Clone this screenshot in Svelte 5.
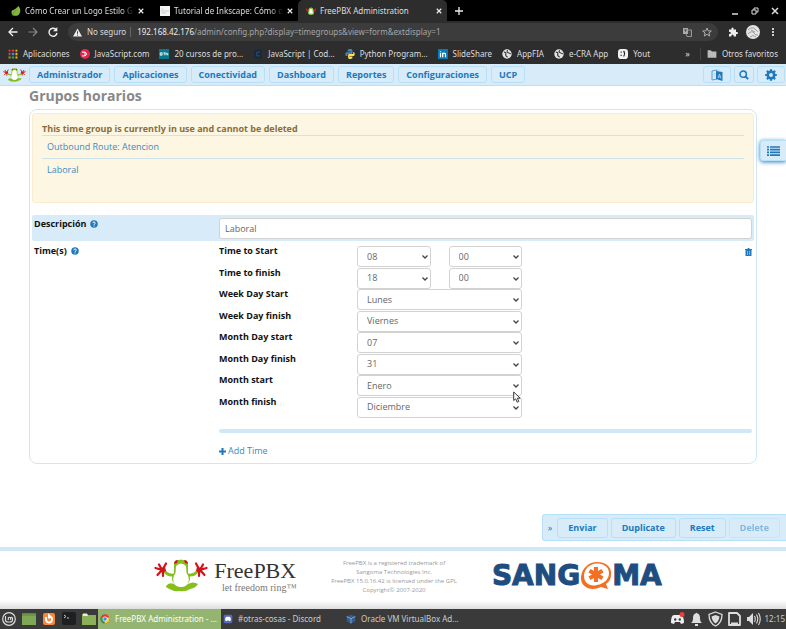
<script>
  const tabs = [
    { title: 'Cómo Crear un Logo Estilo Ge', icon: 'leaf' },
    { title: 'Tutorial de Inkscape: Cómo di', icon: 'page' },
    { title: 'FreePBX Administration', icon: 'frog', active: true }
  ];
  const bookmarks = [
    { label: 'Aplicaciones', icon: 'apps' },
    { label: 'JavaScript.com', icon: 'js' },
    { label: '20 cursos de pro...', icon: 'btn' },
    { label: 'JavaScript | Cod...', icon: 'code' },
    { label: 'Python Program...', icon: 'python' },
    { label: 'SlideShare', icon: 'linkedin' },
    { label: 'AppFIA', icon: 'globe' },
    { label: 'e-CRA App', icon: 'globe' },
    { label: 'Yout', icon: 'yout' }
  ];
  const menu = ['Administrador', 'Aplicaciones', 'Conectividad', 'Dashboard', 'Reportes', 'Configuraciones', 'UCP'];
  const usages = ['Outbound Route: Atencion', 'Laboral'];
  const fields = [
    { id: 'time-start', label: 'Time to Start', values: ['08', '00'] },
    { id: 'time-finish', label: 'Time to finish', values: ['18', '00'] },
    { id: 'wday-start', label: 'Week Day Start', values: ['Lunes'] },
    { id: 'wday-finish', label: 'Week Day finish', values: ['Viernes'] },
    { id: 'mday-start', label: 'Month Day start', values: ['07'] },
    { id: 'mday-finish', label: 'Month Day finish', values: ['31'] },
    { id: 'month-start', label: 'Month start', values: ['Enero'] },
    { id: 'month-finish', label: 'Month finish', values: ['Diciembre'] }
  ];
  let description = $state('Laboral');
</script>

{#snippet frog()}
  <svg class="frog" viewBox="0 0 54 33" aria-hidden="true">
    <path d="M10 11 Q13 17 20 16 M44 11 Q41 17 34 16" fill="none" stroke="#86bf1c" stroke-width="2.8" />
    <path d="M12 27 Q15 23 20 25 Q27 29 34 25 Q39 22 44 25 Q42 29 36 30 Q32 33 25 32 Q19 33 12 28Z" fill="#86bf1c" />
    <path d="M20 6 C20 -1 34 -1 34 6 L34 14 C38 19 36 27 27 27 C18 27 16 19 20 14Z" fill="#86bf1c" />
    <path d="M22 7 Q27 2 32 7 L32.500 14 C37 20 35 28 27 28 C19 28 17 20 21.500 14Z" fill="#fff" />
    <path d="M20 5 Q20 1 24 1 L23 4Z M34 5 Q34 1 30 1 L31 4Z" fill="#c8161d" />
    <path d="M1.500 9 L8 11 L5 5.500 M9 10 L12 4.500 M8 11 L3.500 16 M9 11 L9 17 M52.500 9 L46 11 L49 5.500 M45 10 L42 4.500 M46 11 L50.500 16 M45 11 L45 17" fill="none" stroke="#d3121a" stroke-width="2.2" stroke-linecap="round" />
    <path d="M6 9L11 8L12 12L8 14Z M48 9L43 8L42 12L46 14Z" fill="#d3121a" />
  </svg>
{/snippet}

{#snippet icon(name)}
  <svg class="icon" viewBox="0 0 16 16" aria-hidden="true">
    {#if name === 'leaf'}
      <path d="M12 0 C16 5 16 12 11 15 C6 17 1 15 1 11 C0 5 4 9 12 0Z" fill="#82b541" /><path d="M2 15 Q5 8 9 6" stroke="#5f8f2c" stroke-width="1.3" fill="none" />
    {:else if name === 'page'}
      <path d="M0 0H16V16H0Z" fill="#f4f4f4" /><path d="M1 8H15M2 11H10M2 5H6" stroke="#b9b9b9" />
    {:else if name === 'frog'}
      <path d="M4 6 C5 1 11 1 12 6 L13 12 Q8 17 3 12Z" fill="#8cc63e" /><path d="M6 5H10L11 12H5Z" fill="#fff" /><path d="M0 4L3 8M16 4L13 8M1 8H3M15 8H13" stroke="#e21b1b" stroke-width="2" />
    {:else if name === 'apps'}
      <path d="M1 1h3v3H1z M1 6h3v4H1z" fill="#ea4335" /><path d="M6 1h4v3H6z M1 12h3v3H1z" fill="#ea4335" /><path d="M12 1h3v3h-3z M12 6h3v4h-3z M12 12h3v3h-3z" fill="#fbbc05" /><path d="M6 6h4v4H6z" fill="#4285f4" /><path d="M6 12h4v3H6z M1 12h3v3H1z" fill="#34a853" />
    {:else if name === 'js'}
      <circle cx="8" cy="8" r="8" fill="#e8254f" /><path d="M3 5H8V11H3M8 5Q13 8 8 11" stroke="#fff" stroke-width="1.6" fill="none" />
    {:else if name === 'btn'}
      <path d="M0 0H16V16H0Z" fill="#08788c" /><path d="M2 6H5V10H2ZM2 8H5M7 6H10M8.500 6V10M11 10V6L14 10V6" stroke="#fff" stroke-width="1.2" fill="none" />
    {:else if name === 'code'}
      <path d="M2 1H14V15H2Z" fill="#172a3b" /><path d="M6 5H11M6 5V11H11" stroke="#285475" stroke-width="1.5" fill="none" />
    {:else if name === 'python'}
      <path d="M8 0C4 0 4 2 4 4H9V5H2C0 5 0 11 2 11H4V8H10C12 8 12 6 12 3C12 1 11 0 8 0Z" fill="#4584b6" /><path d="M8 16C12 16 12 14 12 12H7V11H14C16 11 16 5 14 5H13V8H6C5 9 5 9 5 13C5 15 6 16 8 16Z" fill="#ffde57" />
    {:else if name === 'linkedin'}
      <path d="M0 0H16V16H0Z" fill="#0a78b5" /><path d="M4 6V13M7.500 6V13M7.500 9C8 6 12 6 12 9V13M4 3V4.500" stroke="#fff" stroke-width="2" fill="none" />
    {:else if name === 'globe'}
      <circle cx="8" cy="8" r="7.500" fill="#e4e4e4" /><path d="M3 5Q7 5 6 8T9 13M9 2Q7 5 10 6T14 8" stroke="#3a3a3a" stroke-width="1.900" fill="none" />
    {:else if name === 'yout'}
      <rect width="16" height="16" rx="5" fill="#f1f1f1" /><path d="M5 4V6M5 9V11M9 3Q12 7 9 12" stroke="#222" stroke-width="1.800" fill="none" />
    {:else if name === 'help'}
      <circle cx="8" cy="8" r="7.500" fill="#2079bd" /><path d="M5.500 6.200C5.500 3.200 10.700 3.200 10.500 6.200C10.400 8 8 7.700 8 9.800M8 11V13" stroke="#fff" stroke-width="2" fill="none" />
    {/if}
  </svg>
{/snippet}

<div class="screen">
  <header class="browser">
    <div class="tabs">
      {#each tabs as tab}
        <div class="tab" class:active={tab.active}>
          {@render icon(tab.icon)}
          <span class="tab-title">{tab.title}</span>
          <button class="bare" aria-label="Cerrar pestaña"><svg class="x" viewBox="0 0 8 8"><path d="M1 1L7 7M7 1L1 7" stroke="#eee" stroke-width="1.500" /></svg></button>
        </div>
      {/each}
      <button class="bare plus" aria-label="Nueva pestaña"><svg class="x" viewBox="0 0 8 8"><path d="M4 0V8M0 4H8" stroke="#eee" stroke-width="1.300" /></svg></button>
      <div class="window-buttons">
        <button class="bare" aria-label="Minimizar"><svg class="x" viewBox="0 0 8 8"><path d="M1 7H7" stroke="#ddd" stroke-width="1.500" /></svg></button>
        <button class="bare" aria-label="Restaurar"><svg class="x" viewBox="0 0 8 8"><path d="M1 3H5V7H1ZM3 3V1H7V5H5" stroke="#ddd" fill="none" /></svg></button>
        <button class="bare" aria-label="Cerrar"><svg class="x" viewBox="0 0 8 8"><path d="M1 1L7 7M7 1L1 7" stroke="#ddd" stroke-width="1.500" /></svg></button>
      </div>
    </div>

    <div class="toolbar">
      <button class="bare" aria-label="Atrás"><svg class="glyph" viewBox="0 0 10 10"><path d="M9.500 5H1M5 1L1 5L5 9" stroke="#eee" stroke-width="1.300" fill="none" /></svg></button>
      <button class="bare" aria-label="Adelante"><svg class="glyph" viewBox="0 0 10 10"><path d="M.5 5H9M5 1L9 5L5 9" stroke="#888" stroke-width="1.200" fill="none" /></svg></button>
      <button class="bare" aria-label="Recargar"><svg class="glyph" viewBox="0 0 10 10"><path d="M8 2.500A4 4 0 1 0 9 6" stroke="#eee" stroke-width="1.400" fill="none" /><path d="M9.300 0V4.300H5Z" fill="#eee" /></svg></button>
      <div class="omnibox">
        <svg class="warn" viewBox="0 0 10 10" aria-hidden="true"><path d="M5 .5L10 9.500H0Z" fill="#eee" /><path d="M5 3.500V6.500M5 7.300V8.500" stroke="#3c3c3c" /></svg>
        <span class="insecure">No seguro</span>
        <span class="url"><b>192.168.42.176</b>/admin/config.php?display=timegroups&amp;view=form&amp;extdisplay=1</span>
        <svg class="glyph" viewBox="0 0 10 10" aria-hidden="true"><path d="M1 1H6V7H1Z" fill="#aaa" /><path d="M5 3H9.500V9.500H5L4 7" stroke="#999" fill="none" /><path d="M2 3H5M3.500 2V5M6 5H9M7 5L8.500 8" stroke="#555" stroke-width=".8" /></svg>
        <svg class="glyph" viewBox="0 0 10 10" aria-hidden="true"><path d="M5 1L6.200 3.900L9.300 4L6.900 6L7.700 9L5 7.300L2.300 9L3.100 6L.7 4L3.800 3.900Z" stroke="#bbb" fill="none" stroke-width=".9" /></svg>
      </div>
      <svg class="glyph" viewBox="0 0 10 10" aria-hidden="true"><path d="M1 2.500H3.500Q3 .5 4.500 .5T5.500 2.500H8V5Q10 4.500 10 6T8 7V9.500H5.800Q5.500 7.500 4.500 7.500T3.200 9.500H1V7Q3 7 3 6T1 4.800Z" fill="#eee" /></svg>
      <svg class="avatar" viewBox="0 0 14 14" aria-hidden="true"><circle cx="7" cy="7" r="7" fill="#e4e4e4" /><path d="M2 5Q6 1 9 4T12 7M2 9Q6 5 8 8T12 10M4 12Q7 9 10 12M5 5L9 7" stroke="#888" stroke-width=".8" fill="none" /></svg>
      <svg class="glyph" viewBox="0 0 10 10" aria-hidden="true"><path d="M4 1h2v2H4zM4 4h2v2H4zM4 7h2v2H4z" fill="#ccc" /></svg>
    </div>

    <div class="bookmarks">
      {#each bookmarks as mark}
        <a href="#bookmark">{@render icon(mark.icon)}{mark.label}</a>
      {/each}
      <span class="more">»</span>
      <a class="others" href="#bookmark">
        <svg class="icon" viewBox="0 0 16 16" aria-hidden="true"><path d="M1 2H6L8 4H15V14H1Z" fill="#bbb" /></svg>Otros favoritos
      </a>
    </div>
  </header>

  <nav class="menubar">
    <a class="home" href="#home" aria-label="FreePBX">{@render frog()}</a>
    <div class="menu">
      {#each menu as item}
        <button class="btn">{item}</button>
      {/each}
    </div>
    <button class="btn wide" aria-label="Idioma"><svg class="tool" viewBox="0 0 12 12"><path d="M1 2L6 1V10L1 11Z" fill="none" stroke="#5c9fd0" /><path d="M5 2L11.500 3V12L5 10Z" fill="#2079bd" /><path d="M7 9L8.500 5L10 9.500M7.500 8H9.500M2 5H5M3.500 4L3 8M3 1Q6 -1 9 1" stroke="#b9d9ef" fill="none" stroke-width=".8" /></svg></button>
    <button class="btn" aria-label="Buscar"><svg class="tool search" viewBox="0 0 12 12"><circle cx="5" cy="5" r="3.800" stroke="#2079bd" stroke-width="1.800" fill="none" /><path d="M7.800 7.800L11 11" stroke="#2079bd" stroke-width="2.200" /></svg></button>
    <button class="btn wide" aria-label="Ajustes"><svg class="tool" viewBox="0 0 12 12"><circle cx="6" cy="6" r="3.200" stroke="#2079bd" stroke-width="2.600" fill="none" /><path d="M6 .2V2.500M6 9.500V11.800M.2 6H2.500M9.500 6H11.800M1.900 1.900L3.500 3.500M8.500 8.500L10.100 10.100M10.100 1.900L8.500 3.500M3.500 8.500L1.900 10.100" stroke="#2079bd" stroke-width="2.200" /></svg></button>
  </nav>

  <main>
    <h1>Grupos horarios</h1>
    <section class="card">
      <div class="notice">
        <strong>This time group is currently in use and cannot be deleted</strong>
        {#each usages as usage}
          <a href="#usage">{usage}</a>
        {/each}
      </div>

      <form>
        <div class="row shaded">
          <label for="description">Descripción {@render icon('help')}</label>
          <input id="description" bind:value={description} />
        </div>
        <div class="row times">
          <span class="label">Time(s) {@render icon('help')}</span>
          <div class="time-panel">
            <div class="time-set">
              <div class="fields">
                {#each fields as field}
                  <div class="field">
                    <label for={field.id}>{field.label}</label>
                    <div class="selects">
                      {#each field.values as value, i}
                        <div class="select">
                          <select id={i ? field.id + '-minute' : field.id} aria-label={i ? field.label + ' (min)' : undefined}>
                            <option>{value}</option>
                          </select>
                          <svg viewBox="0 0 6 4" aria-hidden="true"><path d="M.5 .5L3 3L5.500 .5" stroke="#444" stroke-width="1.300" fill="none" /></svg>
                        </div>
                      {/each}
                    </div>
                  </div>
                {/each}
              </div>
              <button class="bare trash" type="button" aria-label="Borrar"><svg viewBox="0 0 7 8"><path d="M0 1H2.200L3 0H4L4.800 1H7V2H0Z" fill="#2079bd" /><path d="M.5 2H6.500V8H.5Z" fill="#2079bd" /><path d="M2.500 3V7M4.500 3V7" stroke="#8fbbdd" stroke-width=".8" /></svg></button>
            </div>
            <hr />
            <a class="add" href="#add"><svg viewBox="0 0 8 8" aria-hidden="true"><path d="M4 0V8M0 4H8" stroke="#2079bd" stroke-width="2.400" /></svg>Add Time</a>
          </div>
        </div>
      </form>
    </section>
    <button class="side-toggle" aria-label="Lista"><svg viewBox="0 0 13 10"><path d="M0 1H2M3 1H13M0 3.700H2M3 3.700H13M0 6.400H2M3 6.400H13M0 9.100H2M3 9.100H13" stroke="#2079bd" stroke-width="1.700" /></svg></button>
  </main>

  <div class="actions">
    <span class="collapse">»</span>
    <button class="btn">Enviar</button>
    <button class="btn">Duplicate</button>
    <button class="btn">Reset</button>
    <button class="btn" disabled>Delete</button>
  </div>

  <footer>
    <div class="brand">
      {@render frog()}
      <div class="brand-text"><span class="brand-name">FreePBX</span><span class="brand-tag">let freedom ring™</span></div>
    </div>
    <p>FreePBX is a registered trademark of<br />Sangoma Technologies Inc.<br />FreePBX 15.0.16.42 is licensed under the GPL<br />Copyright© 2007-2020</p>
    <div class="sangoma">
      <span>SANG</span>
      <svg viewBox="0 0 32 28" aria-hidden="true">
        <path fill-rule="evenodd" d="M17 0C26 0 32 5 31 13C31 17 29 20 26 22L28 27L21 25C11 30 0 25 1 15C2 6 9 0 17 0ZM18 1.500C9 1 4 8 4 14C4 21 10 25 17 23C24 22 29 17 29 11C29 5 24 2 18 1.500Z" fill="#f36f21" />
        <path d="M16 5V20M9.500 8.700L22.500 16.300M22.500 8.700L9.500 16.300" stroke="#f36f21" stroke-width="4" />
      </svg>
      <span>MA</span>
    </div>
  </footer>

  <div class="taskbar">
    <button class="bare" aria-label="Menú"><svg viewBox="0 0 14 14"><circle cx="7" cy="7" r="6.300" stroke="#ddd" stroke-width="1.200" fill="none" /><path d="M3.500 4V8Q3.500 10 6 10H8Q10.500 10 10.500 8V6Q9.500 4.500 8.700 6V8M8.700 6Q7 4.500 6.300 6V8" stroke="#ddd" stroke-width="1.100" fill="none" /></svg></button>
    <button class="bare" aria-label="Escritorio"><svg viewBox="0 0 14 14"><path d="M0 1.500H14V13H0Z" fill="#7ea853" /><path d="M0 1.500H14V4H0Z" fill="#6b9742" /></svg></button>
    <button class="bare" aria-label="Editor"><svg viewBox="0 0 14 14"><rect x="1" y="1" width="12" height="12" rx="2" fill="#f5863a" /><path d="M4 5Q3.500 10.500 7 10.500T10 6L7 3.500V6.500" stroke="#fff" stroke-width="2" fill="none" /></svg></button>
    <button class="bare" aria-label="Terminal"><svg viewBox="0 0 14 14"><rect width="14" height="13" rx="2" fill="#1d1f20" /><path d="M2 3L4 4.500L2 6M5 6H7" stroke="#ccc" fill="none" /></svg></button>
    <button class="bare" aria-label="Archivos"><svg viewBox="0 0 14 14"><path d="M0 2H5L6 3H14V13H0Z" fill="#8ab158" /><path d="M1 1.500H5L6 4H1Z" fill="#e8eddf" /></svg></button>
    <button class="task current"><svg viewBox="0 0 14 14"><circle cx="7" cy="7" r="6.500" fill="#e33b2e" /><path d="M7 7L1.400 4A6.500 6.500 0 0 0 6.500 13.500Z" fill="#22a354" /><path d="M7 7L6.500 13.500A6.500 6.500 0 0 0 13 5H8Z" fill="#fcc934" /><circle cx="7" cy="7" r="3" fill="#4285f4" stroke="#fff" /></svg>FreePBX Administration - ...</button>
    <button class="task"><svg viewBox="0 0 14 14"><rect x="1" y="1" width="12" height="12" rx="2" fill="#5769b8" /><path d="M3 9Q3 4 5 4H9Q11 4 11 9L9 10L8 9H6L5 10Z" fill="#fff" /></svg>#otras-cosas - Discord</button>
    <button class="task"><svg viewBox="0 0 14 14"><path d="M7 1L13 3.500V10L7 13.500L1 10V3.500Z" fill="#345c8f" /><path d="M1 3.500L7 6.500L13 3.500M7 6.500V13" stroke="#a8c0dc" fill="none" /></svg>Oracle VM VirtualBox Ad...</button>
    <div class="tray">
      <svg viewBox="0 0 15 16" aria-hidden="true"><path d="M1 12Q1 4 4 4L6 4H9L11 4Q14 5 14 12L11 13L10 11H5L4 13Z" fill="#eee" /><circle cx="5.200" cy="8.500" r="1.200" fill="#3a3a3a" /><circle cx="9.800" cy="8.500" r="1.200" fill="#3a3a3a" /><circle cx="12" cy="3.500" r="2.500" fill="#ee3d3d" /></svg>
      <svg viewBox="0 0 15 16" aria-hidden="true"><path d="M2 12Q4 11 4 7Q4 3 6.500 2.500Q7.500 1 8.500 2.500Q11 3 11 7Q11 11 13 12ZM6 13H9V15H6Z" fill="#ddd" /></svg>
      <svg viewBox="0 0 15 16" aria-hidden="true"><path d="M7.500 1L14 3.500Q14 12 7.500 15Q1 12 1 3.500Z" fill="none" stroke="#ddd" stroke-width="1.300" /><path d="M7.500 4L11.500 5.500Q11 10 7.500 12.500Q4 10 3.500 5.500Z" fill="#ddd" /></svg>
      <svg viewBox="0 0 15 16" aria-hidden="true"><path d="M2 2H10L13 5V14H2Z" fill="none" stroke="#ddd" stroke-width="1.800" stroke-linejoin="round" /><path d="M4 11.500H11V13H4Z" fill="#ddd" /></svg>
      <svg viewBox="0 0 15 16" aria-hidden="true"><path d="M1 6H3L7 2V14L3 10H1Z" fill="#ddd" /><path d="M8.500 5Q10 8 8.500 11M10.500 3.500Q13 8 10.500 12.500M12.500 2Q16 8 12.500 14" stroke="#ddd" stroke-width="1.100" fill="none" /></svg>
      <time>12:15</time>
    </div>
  </div>

  <svg class="pointer" viewBox="0 0 8 12" aria-hidden="true"><path d="M.7 1V9.500L2.700 7.800L4.200 11.200L5.800 10.500L4.400 7.200H7.200Z" fill="#fff" stroke="#222" stroke-width=".9" /></svg>
</div>

<style>
  :global(body) { background: #fff; }
  .screen, .screen * { box-sizing: border-box; }
  .screen {
    position: relative;
    display: flex;
    flex-direction: column;
    min-height: 100vh;
    overflow: hidden;
    font: 9px/12px "Open Sans", "Noto Sans", sans-serif;
    color: #111;
  }
  a { color: #3a8ac4; text-decoration: none; }
  button, input, select { font: inherit; }
  svg { display: block; flex: none; }
  .bare { display: flex; padding: 0; border: 0; background: none; }
  .icon { width: 10px; height: 10px; }

  .browser { background: #2d2d2d; color: #ddd; font-family: "Noto Sans", sans-serif; font-size: 8px; }
  .tabs { display: flex; align-items: center; height: 21px; background: #000; }
  .tab { display: flex; align-items: center; gap: 4px; flex: 0 1 149px; min-width: 0; height: 21px; padding: 0 5px 0 11px; white-space: nowrap; }
  .tab.active { background: #2d2d2d; border-radius: 5px 5px 0 0; padding-left: 8px; }
  .tab-title { flex: 1; overflow: hidden; mask-image: linear-gradient(90deg, #000 88%, transparent); }
  .active .tab-title { mask-image: none; }
  .x { width: 8px; height: 8px; }
  .tab .x { width: 6px; height: 6px; }
  .plus { margin-left: 8px; }
  .window-buttons { display: flex; gap: 12px; margin-left: auto; padding-right: 7px; }
  .toolbar { display: flex; align-items: center; gap: 10px; height: 22px; padding: 0 8px; }
  .glyph { width: 10px; height: 10px; }
  .avatar { width: 14px; height: 14px; margin: 0 -2px; }
  .omnibox { display: flex; align-items: center; gap: 10px; flex: 1; height: 18px; padding: 0 6px 0 5px; border-radius: 9px; background: #3c3c3c; }
  .warn { width: 9px; height: 9px; margin-right: -5px; }
  .insecure { padding-right: 4px; border-right: 1px solid #666; line-height: 10px; margin-right: -4px; }
  .url { flex: 1; color: #a5a5a5; }
  .url b { color: #eee; font-weight: 400; }
  .bookmarks { display: flex; align-items: center; gap: 10px; height: 21px; padding: 0 8px; white-space: nowrap; }
  .bookmarks a { display: flex; align-items: center; gap: 5px; color: #ddd; }
  .more { margin-left: auto; font-size: 9px; }
  .bookmarks .others { padding-left: 6px; border-left: 1px solid #444; }

  .btn {
    display: flex;
    align-items: center;
    justify-content: center;
    padding: 0 7px;
    border: 1px solid #b8dff8;
    border-radius: 3px;
    background: #d7ebf9;
    color: #2079bd;
    font-weight: 700;
  }
  .menubar { display: flex; align-items: center; gap: 3px; height: 22px; padding: 0 1px 0 3px; background: #d7ebf9; border-bottom: 1px solid #b8dff8; }
  .menu { display: flex; flex: 1; gap: 4px; }
  .menubar .btn { height: 17px; }
  .home { width: 23px; }
  .home .frog { width: 23px; height: 14px; }
  .tool { width: 12px; height: 12px; }
  .search { width: 10px; height: 10px; }
  .menubar .btn:has(.search) { padding: 0 4px; }

  main { position: relative; padding: 0 29px; }
  h1 { margin: 0; font-size: 14px; line-height: 19px; color: #888; }
  .card { margin-top: 4px; padding: 3px 2px 4px; border: 1px solid #cfe6f5; border-radius: 8px; }
  .notice { display: flex; flex-direction: column; min-height: 90px; padding: 8px 9px; border: 1px solid #faecd0; border-radius: 3px; background: #fdf6e2; color: #8a6d3b; }
  .notice strong { line-height: 13px; }
  .notice a { height: 23px; padding: 0 5px; border-top: 1px solid #cfe4ea; line-height: 22px; }
  form { margin-top: 12px; }
  .row { display: grid; grid-template-columns: 185px 1fr; padding: 3px 2px 2px; }
  .shaded { background: #d7ebf9; border-radius: 2px; }
  .row label, .label { display: flex; gap: 4px; font-weight: 700; line-height: 12px; }
  .row .icon { width: 8px; height: 8px; margin-top: 2px; }
  input, select { width: 100%; height: 21px; border: 1px solid #d2d2d2; border-radius: 3px; background: #fff; color: #666; }
  input { padding: 0 5px; }
  .times { padding-top: 4px; }
  .time-set { display: flex; justify-content: space-between; }
  .fields { display: grid; grid-template-rows: repeat(8, minmax(0, 1fr)); height: 172px; }
  .field { display: grid; grid-template-columns: 138px 165px; }
  .selects { display: flex; gap: 18px; padding-top: 1px; }
  .select { position: relative; flex: 1; }
  select { display: block; appearance: none; padding: 0 9px; }
  .select svg { position: absolute; right: 3px; top: 9px; width: 6px; height: 4px; pointer-events: none; }
  .trash svg { width: 7px; height: 8px; margin-top: 3px; }
  .trash { align-self: flex-start; }
  hr { height: 4px; margin: 12px 0; border: 0; border-radius: 2px; background: #d0e8f6; }
  .add { display: flex; align-items: center; gap: 2px; }
  .add svg { width: 7px; height: 7px; }
  .side-toggle { position: absolute; right: 0; top: 54px; display: flex; align-items: center; width: 26px; height: 21px; padding: 0 0 0 6px; border: 1px solid #b8dff8; border-right: 0; border-radius: 3px 0 0 3px; background: #d7ebf9; box-shadow: 0 1px 4px #2079bd; }
  .side-toggle svg { width: 13px; height: 10px; }

  .actions { display: flex; align-items: center; align-self: flex-end; gap: 3px; height: 27px; margin-top: auto; padding: 0 6px 0 5px; border: 1px solid #b8dff8; border-right: 0; border-radius: 3px 0 0 3px; background: #d7ebf9; }
  .actions .btn { height: 20px; padding: 0 10px; }
  .actions .btn:disabled { opacity: 0.45; }
  .collapse { margin-right: 2px; color: #2079bd; }

  footer { display: flex; justify-content: center; gap: 35px; height: 62px; margin-top: 6px; padding: 8px 0 0 30px; border-top: 4px solid #d0e8f6; background: linear-gradient(#fff 85%, #ddd); }
  .brand { display: flex; gap: 6px; }
  .brand .frog { width: 54px; height: 33px; }
  .brand-text { display: flex; flex-direction: column; align-items: flex-end; font-family: "Liberation Serif", serif; color: #333; }
  .brand-name { font-size: 22px; line-height: 23px; }
  .brand-tag { font-size: 10px; line-height: 12px; color: #777; }
  footer p { margin: 0; font-size: 6px; line-height: 9px; text-align: center; color: #999; }
  .sangoma { display: flex; align-items: center; height: 34px; color: #204d80; font: 700 28px/28px "DejaVu Sans", sans-serif; -webkit-text-stroke: 1px #204d80; }
  .sangoma svg { width: 32px; height: 28px; }

  .taskbar { display: flex; align-items: center; gap: 6px; height: 20px; padding: 0 1px 0 2px; background: #3a3a3a; color: #ccc; font: 8px/12px "Noto Sans", sans-serif; }
  .taskbar .bare svg { width: 14px; height: 14px; }
  .task { display: flex; align-items: center; gap: 5px; width: 123px; height: 20px; padding: 0 2px; border: 0; background: none; color: #ccc; white-space: nowrap; margin-right: -6px; }
  .task.current { margin-left: -4px; background: #93b571; color: #fff; }
  .task svg { width: 10px; height: 10px; }
  .tray { display: flex; align-items: center; gap: 4px; margin-left: auto; }
  .tray svg { width: 15px; height: 16px; }
  .pointer { position: absolute; left: 513px; top: 391px; width: 8px; height: 12px; pointer-events: none; }
</style>
